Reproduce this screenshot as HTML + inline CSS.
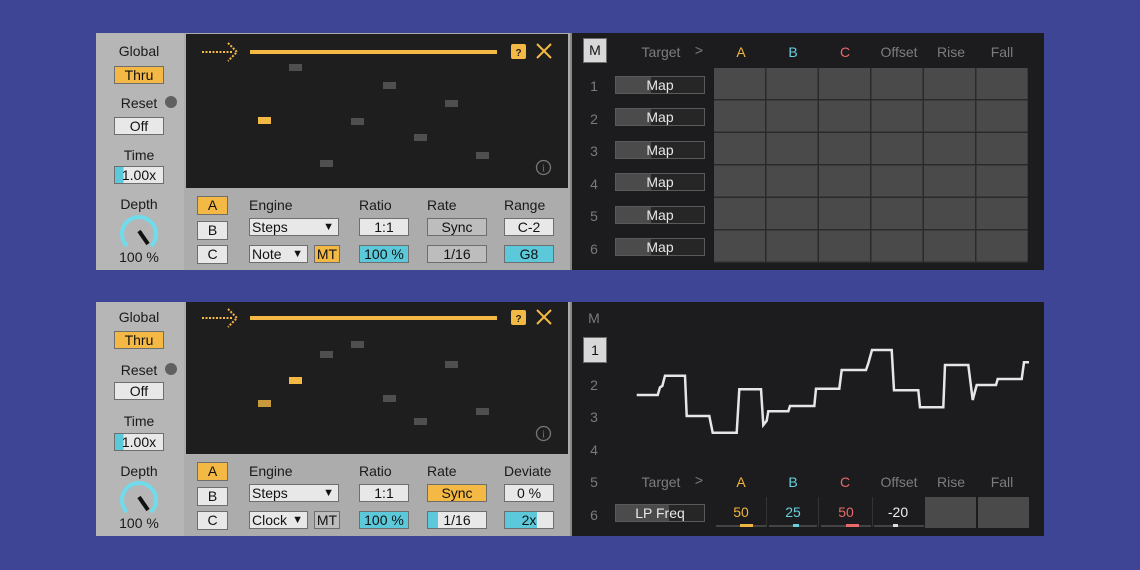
<!DOCTYPE html>
<html><head><meta charset="utf-8"><style>
*{margin:0;padding:0;box-sizing:border-box}
body{width:1140px;height:570px;background:#3e4594;position:relative;overflow:hidden;font-family:"Liberation Sans",sans-serif;}
.a{position:absolute}
.gray{background:#b3b3b3}
.dark{background:#1e1e1f}
.lbl{position:absolute;font-size:14px;color:#1a1a1a;text-align:center}
.box{position:absolute;background:#e8e8e8;border:1px solid #6e6e6e;font-size:14px;color:#111;text-align:center;line-height:16px}
.or{background:#f4b844}
.cy{background:#5cc9da}
.blk{position:absolute;width:13px;height:7px;background:#4f4f4f}
.ob{position:absolute;width:13px;height:7px;background:#f4b844}
.num{position:absolute;font-size:14px;color:#7a7a7a;width:20px;text-align:center}
.hd{position:absolute;font-size:14px;color:#7d7d7d;text-align:center;width:50px}
.map{position:absolute;width:90px;height:18px;border:1px solid #5a5a5a;background:linear-gradient(90deg,#4b4b4b 0,#4b4b4b 40%,#262626 40%);color:#e8e8e8;font-size:14px;text-align:center;line-height:16px}
.dd:after{content:"▼";position:absolute;right:4px;top:0;font-size:11px}
</style></head><body>

<!-- ===== TOP DEVICE ===== -->
<div class="a" style="left:96px;top:33px;width:88px;height:237px;background:#b6b6b6"></div>
<div class="a" style="left:184px;top:33px;width:388px;height:237px;background:#acacac"></div>
<div class="a dark" style="left:186px;top:34px;width:382px;height:154px"></div>
<div class="a" style="left:570px;top:33px;width:2px;height:237px;background:#888"></div>
<div class="a" style="left:572px;top:33px;width:472px;height:237px;background:#1c1c1e"></div>

<div class="lbl" style="left:100px;top:43px;width:78px">Global</div>
<div class="box or" style="left:114px;top:66px;width:50px;height:18px">Thru</div>
<div class="lbl" style="left:100px;top:95px;width:78px">Reset</div>
<div class="a" style="left:165px;top:96px;width:12px;height:12px;border-radius:50%;background:#606060"></div>
<div class="box" style="left:114px;top:117px;width:50px;height:18px">Off</div>
<div class="lbl" style="left:100px;top:147px;width:78px">Time</div>
<div class="box" style="left:114px;top:166px;width:50px;height:18px;background:linear-gradient(90deg,#5cc9da 0,#5cc9da 18%,#e8e8e8 18%)">1.00x</div>
<div class="lbl" style="left:100px;top:196px;width:78px">Depth</div>
<svg class="a" style="left:119px;top:212px" width="40" height="40"><path d="M8 34 A17 17 0 1 1 32 34" fill="none" stroke="#6fdcec" stroke-width="4"/><line x1="20" y1="19" x2="29" y2="32" stroke="#111" stroke-width="4"/></svg>
<div class="lbl" style="left:100px;top:249px;width:78px">100 %</div>

<svg class="a" style="left:200px;top:40px" width="360" height="24">
<line x1="2" y1="12" x2="33" y2="12" stroke="#f4b844" stroke-width="2" stroke-dasharray="2 1.5"/>
<path d="M28 3 L37 12 L28 21" fill="none" stroke="#f4b844" stroke-width="2" stroke-dasharray="2 1.5"/>
<rect x="50" y="10" width="247" height="4" fill="#f4b844"/>
<rect x="311" y="4" width="15" height="15" rx="2" fill="#f4b844"/><text x="318.5" y="16" font-size="10" font-weight="bold" text-anchor="middle" fill="#222" font-family="Liberation Sans">?</text>
<path d="M337 4 L351 18 M351 4 L337 18" stroke="#f4b844" stroke-width="2"/>
</svg>
<div class="blk" style="left:289px;top:64px"></div>
<div class="blk" style="left:383px;top:82px"></div>
<div class="blk" style="left:445px;top:100px"></div>
<div class="blk" style="left:351px;top:118px"></div>
<div class="blk" style="left:414px;top:134px"></div>
<div class="blk" style="left:476px;top:152px"></div>
<div class="blk" style="left:320px;top:160px"></div>
<div class="ob" style="left:258px;top:117px"></div>
<svg class="a" style="left:535px;top:159px" width="17" height="17"><circle cx="8.5" cy="8.5" r="7" fill="none" stroke="#777" stroke-width="1.3"/><text x="8.5" y="12.5" font-size="10" text-anchor="middle" fill="#777" font-family="Liberation Serif">i</text></svg>

<div class="box or" style="left:197px;top:196px;width:31px;height:19px">A</div>
<div class="box" style="left:197px;top:221px;width:31px;height:19px">B</div>
<div class="box" style="left:197px;top:245px;width:31px;height:19px">C</div>
<div class="lbl" style="left:249px;top:197px;text-align:left">Engine</div>
<div class="box dd" style="left:249px;top:218px;width:90px;height:18px;text-align:left;padding-left:2px">Steps</div>
<div class="box dd" style="left:249px;top:245px;width:59px;height:18px;text-align:left;padding-left:2px">Note</div>
<div class="box or" style="left:314px;top:245px;width:26px;height:18px">MT</div>
<div class="lbl" style="left:359px;top:197px;text-align:left">Ratio</div>
<div class="box" style="left:359px;top:218px;width:50px;height:18px">1:1</div>
<div class="box cy" style="left:359px;top:245px;width:50px;height:18px">100 %</div>
<div class="lbl" style="left:427px;top:197px;text-align:left">Rate</div>
<div class="box" style="left:427px;top:218px;width:60px;height:18px;background:#bdbdbd">Sync</div>
<div class="box" style="left:427px;top:245px;width:60px;height:18px;background:#bdbdbd">1/16</div>
<div class="lbl" style="left:504px;top:197px;text-align:left">Range</div>
<div class="box" style="left:504px;top:218px;width:50px;height:18px">C-2</div>
<div class="box cy" style="left:504px;top:245px;width:50px;height:18px">G8</div>

<div class="box" style="left:583px;top:38px;width:24px;height:25px;line-height:23px;background:#d8d8d8">M</div>
<div class="hd" style="left:636px;top:44px">Target</div>
<div class="hd" style="left:674px;top:42px">&gt;</div>
<div class="hd" style="left:716px;top:44px;color:#f0b440">A</div>
<div class="hd" style="left:768px;top:44px;color:#67d0e0">B</div>
<div class="hd" style="left:820px;top:44px;color:#e86a6a">C</div>
<div class="hd" style="left:874px;top:44px">Offset</div>
<div class="hd" style="left:926px;top:44px">Rise</div>
<div class="hd" style="left:977px;top:44px">Fall</div>
<div class="num" style="left:584px;top:78px">1</div><div class="map" style="left:615px;top:76px">Map</div>
<div class="num" style="left:584px;top:111px">2</div><div class="map" style="left:615px;top:108px">Map</div>
<div class="num" style="left:584px;top:143px">3</div><div class="map" style="left:615px;top:141px">Map</div>
<div class="num" style="left:584px;top:176px">4</div><div class="map" style="left:615px;top:173px">Map</div>
<div class="num" style="left:584px;top:208px">5</div><div class="map" style="left:615px;top:206px">Map</div>
<div class="num" style="left:584px;top:241px">6</div><div class="map" style="left:615px;top:238px">Map</div>
<div class="a" style="left:714px;top:68px;width:314px;height:195px;background:repeating-linear-gradient(90deg,#4a4a4a 0,#4a4a4a 51px,#2a2a2a 51px,#2a2a2a 52.5px),#4a4a4a"></div>
<div class="a" style="left:714px;top:68px;width:314px;height:195px;background:repeating-linear-gradient(180deg,transparent 0,transparent 31px,#2a2a2a 31px,#2a2a2a 32.5px)"></div>

<!-- ===== BOTTOM DEVICE ===== -->
<div class="a" style="left:96px;top:302px;width:88px;height:234px;background:#b6b6b6"></div>
<div class="a" style="left:184px;top:302px;width:388px;height:234px;background:#acacac"></div>
<div class="a dark" style="left:186px;top:302px;width:382px;height:152px"></div>
<div class="a" style="left:570px;top:302px;width:2px;height:234px;background:#888"></div>
<div class="a" style="left:572px;top:302px;width:472px;height:234px;background:#1c1c1e"></div>

<div class="lbl" style="left:100px;top:309px;width:78px">Global</div>
<div class="box or" style="left:114px;top:331px;width:50px;height:18px">Thru</div>
<div class="lbl" style="left:100px;top:362px;width:78px">Reset</div>
<div class="a" style="left:165px;top:363px;width:12px;height:12px;border-radius:50%;background:#606060"></div>
<div class="box" style="left:114px;top:382px;width:50px;height:18px">Off</div>
<div class="lbl" style="left:100px;top:413px;width:78px">Time</div>
<div class="box" style="left:114px;top:433px;width:50px;height:18px;background:linear-gradient(90deg,#5cc9da 0,#5cc9da 18%,#e8e8e8 18%)">1.00x</div>
<div class="lbl" style="left:100px;top:463px;width:78px">Depth</div>
<svg class="a" style="left:119px;top:478px" width="40" height="40"><path d="M8 34 A17 17 0 1 1 32 34" fill="none" stroke="#6fdcec" stroke-width="4"/><line x1="20" y1="19" x2="29" y2="32" stroke="#111" stroke-width="4"/></svg>
<div class="lbl" style="left:100px;top:515px;width:78px">100 %</div>

<svg class="a" style="left:200px;top:306px" width="360" height="24">
<line x1="2" y1="12" x2="33" y2="12" stroke="#f4b844" stroke-width="2" stroke-dasharray="2 1.5"/>
<path d="M28 3 L37 12 L28 21" fill="none" stroke="#f4b844" stroke-width="2" stroke-dasharray="2 1.5"/>
<rect x="50" y="10" width="247" height="4" fill="#f4b844"/>
<rect x="311" y="4" width="15" height="15" rx="2" fill="#f4b844"/><text x="318.5" y="16" font-size="10" font-weight="bold" text-anchor="middle" fill="#222" font-family="Liberation Sans">?</text>
<path d="M337 4 L351 18 M351 4 L337 18" stroke="#f4b844" stroke-width="2"/>
</svg>
<div class="blk" style="left:320px;top:351px"></div>
<div class="blk" style="left:351px;top:341px"></div>
<div class="blk" style="left:383px;top:395px"></div>
<div class="blk" style="left:414px;top:418px"></div>
<div class="blk" style="left:445px;top:361px"></div>
<div class="blk" style="left:476px;top:408px"></div>
<div class="ob" style="left:289px;top:377px"></div>
<div class="ob" style="left:258px;top:400px;background:#c99a3c"></div>
<svg class="a" style="left:535px;top:425px" width="17" height="17"><circle cx="8.5" cy="8.5" r="7" fill="none" stroke="#777" stroke-width="1.3"/><text x="8.5" y="12.5" font-size="10" text-anchor="middle" fill="#777" font-family="Liberation Serif">i</text></svg>

<div class="box or" style="left:197px;top:462px;width:31px;height:19px">A</div>
<div class="box" style="left:197px;top:487px;width:31px;height:19px">B</div>
<div class="box" style="left:197px;top:511px;width:31px;height:19px">C</div>
<div class="lbl" style="left:249px;top:463px;text-align:left">Engine</div>
<div class="box dd" style="left:249px;top:484px;width:90px;height:18px;text-align:left;padding-left:2px">Steps</div>
<div class="box dd" style="left:249px;top:511px;width:59px;height:18px;text-align:left;padding-left:2px">Clock</div>
<div class="box" style="left:314px;top:511px;width:26px;height:18px;background:#bdbdbd">MT</div>
<div class="lbl" style="left:359px;top:463px;text-align:left">Ratio</div>
<div class="box" style="left:359px;top:484px;width:50px;height:18px">1:1</div>
<div class="box cy" style="left:359px;top:511px;width:50px;height:18px">100 %</div>
<div class="lbl" style="left:427px;top:463px;text-align:left">Rate</div>
<div class="box or" style="left:427px;top:484px;width:60px;height:18px">Sync</div>
<div class="box" style="left:427px;top:511px;width:60px;height:18px;background:linear-gradient(90deg,#5cc9da 0,#5cc9da 17%,#e8e8e8 17%)">1/16</div>
<div class="lbl" style="left:504px;top:463px;text-align:left">Deviate</div>
<div class="box" style="left:504px;top:484px;width:50px;height:18px">0 %</div>
<div class="box" style="left:504px;top:511px;width:50px;height:18px;background:linear-gradient(90deg,#5cc9da 0,#5cc9da 67%,#e8e8e8 67%)">2x</div>

<div class="num" style="left:584px;top:310px">M</div>
<div class="box" style="left:583px;top:337px;width:24px;height:26px;line-height:24px;background:#d8d8d8">1</div>
<div class="num" style="left:584px;top:377px">2</div>
<div class="num" style="left:584px;top:409px">3</div>
<div class="num" style="left:584px;top:442px">4</div>
<div class="num" style="left:584px;top:474px">5</div>
<div class="num" style="left:584px;top:507px">6</div>
<svg class="a" style="left:572px;top:302px" width="472" height="234">
<polyline transform="translate(-572,-302)" fill="none" stroke="#e6e6e6" stroke-width="2.5" points="636.7,395 657.7,395 660,387.3 662.3,386 665,375.7 685,375.7 686.7,416 709.3,416 712.7,432.7 736.7,432.7 739.3,389.3 761,389.3 763.3,425 766.7,420.7 768.3,411.3 788.3,411.3 790,406 814.3,406 816,388.7 839.3,388.7 841.7,370 866,370 868.3,363.3 872,350 891.7,350 894,390.3 918.3,390.3 920,407.3 943.3,407.3 945,365 968.3,365 972.7,400 976.7,385 996,385 997.7,379 1021.7,379 1024,362.3 1029,362.3"/>
</svg>
<div class="hd" style="left:636px;top:474px">Target</div>
<div class="hd" style="left:674px;top:472px">&gt;</div>
<div class="hd" style="left:716px;top:474px;color:#f0b440">A</div>
<div class="hd" style="left:768px;top:474px;color:#67d0e0">B</div>
<div class="hd" style="left:820px;top:474px;color:#e86a6a">C</div>
<div class="hd" style="left:874px;top:474px">Offset</div>
<div class="hd" style="left:926px;top:474px">Rise</div>
<div class="hd" style="left:977px;top:474px">Fall</div>
<div class="map" style="left:615px;top:504px;background:linear-gradient(90deg,#4b4b4b 0,#4b4b4b 60%,#262626 60%)">LP Freq</div>
<div class="a" style="left:766px;top:497px;width:1px;height:30px;background:#333"></div>
<div class="a" style="left:818px;top:497px;width:1px;height:30px;background:#333"></div>
<div class="a" style="left:872px;top:497px;width:1px;height:30px;background:#333"></div>
<div class="hd" style="left:716px;top:504px;color:#f0b440">50</div>
<div class="hd" style="left:768px;top:504px;color:#67d0e0">25</div>
<div class="hd" style="left:821px;top:504px;color:#e86a6a">50</div>
<div class="hd" style="left:873px;top:504px;color:#eee">-20</div>
<div class="a" style="left:716px;top:525px;width:50px;height:2px;background:#444"></div><div class="a" style="left:740px;top:524px;width:13px;height:3px;background:#f0b440"></div>
<div class="a" style="left:769px;top:525px;width:48px;height:2px;background:#444"></div><div class="a" style="left:793px;top:524px;width:6px;height:3px;background:#67d0e0"></div>
<div class="a" style="left:821px;top:525px;width:50px;height:2px;background:#444"></div><div class="a" style="left:846px;top:524px;width:13px;height:3px;background:#e86a6a"></div>
<div class="a" style="left:874px;top:525px;width:50px;height:2px;background:#444"></div><div class="a" style="left:893px;top:524px;width:5px;height:3px;background:#ddd"></div>
<div class="a" style="left:925px;top:497px;width:51px;height:31px;background:#4a4a4a"></div>
<div class="a" style="left:978px;top:497px;width:51px;height:31px;background:#4a4a4a"></div>
</body></html>
